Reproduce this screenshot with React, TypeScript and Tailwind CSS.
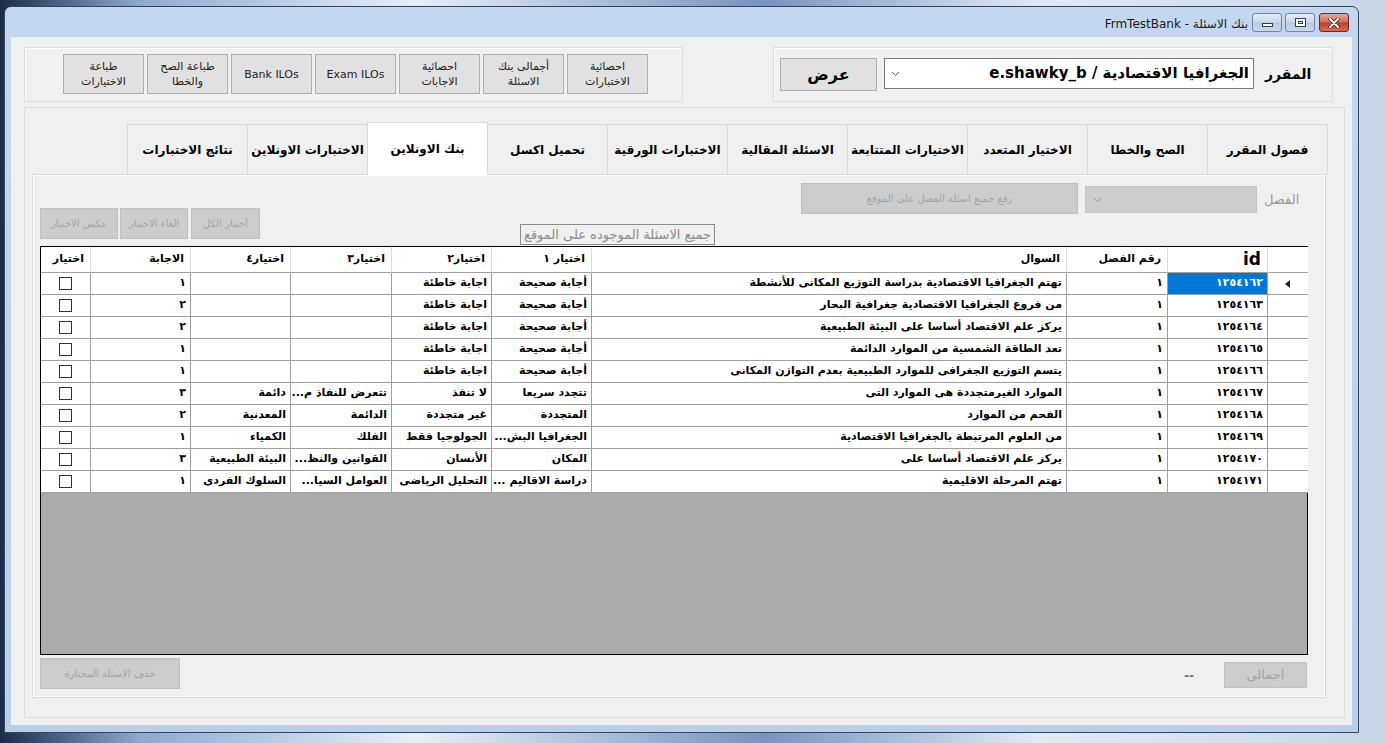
import React from "react";

const FONT = "font-['Liberation_Sans','DejaVu_Sans',sans-serif]";

type Row = {
  id: string;
  ch: string;
  q: string;
  a1: string;
  a2: string;
  a3: string;
  a4: string;
  ans: string;
};

const rows: Row[] = [
  { id: "١٢٥٤١٦٢", ch: "١", q: "تهتم الجغرافيا الاقتصادية بدراسة التوزيع المكانى للأنشطة", a1: "أجابة صحيحة", a2: "اجابة خاطئة", a3: "", a4: "", ans: "١" },
  { id: "١٢٥٤١٦٣", ch: "١", q: "من فروع الجغرافيا الاقتصادية جغرافية البحار", a1: "أجابة صحيحة", a2: "اجابة خاطئة", a3: "", a4: "", ans: "٢" },
  { id: "١٢٥٤١٦٤", ch: "١", q: "يركز علم الاقتصاد أساسا على البيئة الطبيعية", a1: "أجابة صحيحة", a2: "اجابة خاطئة", a3: "", a4: "", ans: "٢" },
  { id: "١٢٥٤١٦٥", ch: "١", q: "تعد الطاقة الشمسية من الموارد الدائمة", a1: "أجابة صحيحة", a2: "اجابة خاطئة", a3: "", a4: "", ans: "١" },
  { id: "١٢٥٤١٦٦", ch: "١", q: "يتسم التوزيع الجغرافى للموارد الطبيعية بعدم التوازن المكانى", a1: "أجابة صحيحة", a2: "اجابة خاطئة", a3: "", a4: "", ans: "١" },
  { id: "١٢٥٤١٦٧", ch: "١", q: "الموارد الغيرمتجددة هى الموارد التى", a1: "تتجدد سريعا", a2: "لا تنفذ", a3: "تتعرض للنفاذ م...", a4: "دائمة", ans: "٣" },
  { id: "١٢٥٤١٦٨", ch: "١", q: "الفحم من الموارد", a1: "المتجددة", a2: "غير متجددة", a3: "الدائمة", a4: "المعدنية", ans: "٢" },
  { id: "١٢٥٤١٦٩", ch: "١", q: "من العلوم المرتبطة بالجغرافيا الاقتصادية", a1: "الجغرافيا البش...", a2: "الجولوجيا فقط", a3: "الفلك", a4: "الكمياء", ans: "١" },
  { id: "١٢٥٤١٧٠", ch: "١", q: "يركز علم الاقتصاد أساسا على", a1: "المكان", a2: "الأنسان", a3: "القوانين والنظ...", a4: "البيئة الطبيعية", ans: "٣" },
  { id: "١٢٥٤١٧١", ch: "١", q: "تهتم المرحلة الاقليمية", a1: "دراسة الاقاليم ...", a2: "التحليل الرياضى", a3: "العوامل السيا...", a4: "السلوك الفردى", ans: "١" },
];

const tabs = [
  "نتائج الاختبارات",
  "الاختبارات الاونلاين",
  "بنك الاونلاين",
  "تحميل اكسل",
  "الاختبارات الورقية",
  "الاسئلة المقالية",
  "الاختيارات المتتابعة",
  "الاختيار المتعدد",
  "الصح والخطا",
  "فصول المقرر",
];

const topButtons = [
  ["طباعة", "الاختيارات"],
  ["طباعة الصح", "والخطا"],
  ["Bank ILOs"],
  ["Exam ILOs"],
  ["احصائية", "الاجابات"],
  ["أجمالى بنك", "الاسئلة"],
  ["احصائية", "الاختبارات"],
];

const GRID_COLS = "grid grid-cols-[50px_100px_100px_101px_100px_100px_475px_101px_100px_40px]";

function Chevron({ color = "#555" }: { color?: string }) {
  return (
    <svg width="9" height="6" viewBox="0 0 9 6">
      <polyline points="1,1 4.5,4.5 8,1" fill="none" stroke={color} strokeWidth="1" />
    </svg>
  );
}

function Cell({ text, sel, id }: { text: string; sel?: boolean; id?: boolean }) {
  return (
    <div
      className={`flex h-[22px] items-center justify-end overflow-hidden whitespace-nowrap border-r border-b border-[#a0a0a0] pr-[4px] text-[11px] font-bold ${
        sel ? "bg-[#0078d7] text-white" : "bg-white text-black"
      } ${id ? "tracking-[2.5px]" : ""}`}
    >
      <span dir="rtl">{text}</span>
    </div>
  );
}

function HeadCell({ text, big }: { text: string; big?: boolean }) {
  return (
    <div className="flex h-[26px] items-center justify-end border-r border-b border-r-[#dcdcdc] border-b-[#a0a0a0] bg-white pr-[6px]">
      <span dir="rtl" className={big ? "text-[17px] font-bold" : "text-[11px] font-bold"}>
        {text}
      </span>
    </div>
  );
}

function DataGrid() {
  return (
    <div className="ml-[7px] flex h-[409px] w-[1268px] flex-col border border-black bg-[#ababab]">
      <div className={GRID_COLS}>
        <HeadCell text="اختيار" />
        <HeadCell text="الاجابة" />
        <HeadCell text="اختيار٤" />
        <HeadCell text="اختيار٣" />
        <HeadCell text="اختيار٢" />
        <HeadCell text="اختيار ١" />
        <HeadCell text="السوال" />
        <HeadCell text="رقم الفصل" />
        <HeadCell text="id" big />
        <div className="h-[26px] border-b border-[#a0a0a0] bg-white" />
      </div>
      {rows.map((r, i) => (
        <div key={r.id} className={GRID_COLS}>
          <div className="flex h-[22px] items-center justify-center border-r border-b border-[#a0a0a0] bg-white">
            <div className="h-[13px] w-[13px] border border-[#333] bg-white" />
          </div>
          <Cell text={r.ans} />
          <Cell text={r.a4} />
          <Cell text={r.a3} />
          <Cell text={r.a2} />
          <Cell text={r.a1} />
          <Cell text={r.q} />
          <Cell text={r.ch} />
          <Cell text={r.id} sel={i === 0} id />
          <div className="flex h-[22px] items-center justify-center border-b border-[#a0a0a0] bg-white">
            {i === 0 && (
              <svg width="6" height="8" viewBox="0 0 6 8">
                <polygon points="5,0 5,8 0,4" fill="#222" />
              </svg>
            )}
          </div>
        </div>
      ))}
    </div>
  );
}

function DisabledBtn({ text, w, h, cls = "" }: { text: string; w: string; h: string; cls?: string }) {
  return (
    <div
      className={`flex items-center justify-center border border-[#bfbfbf] bg-[#cccccc] text-[10px] text-[#a2a2a2] ${w} ${h} ${cls}`}
    >
      <span dir="rtl">{text}</span>
    </div>
  );
}

function TabPage() {
  return (
    <div className="ml-[7px] flex h-[524px] w-[1294px] flex-col border border-[#d9d9d9] bg-[#f0f0f0] shadow-[inset_0_0_0_1px_#ffffff]">
      <div className="flex h-[71px] items-start pl-[7px]">
        <div className="mt-[33px] flex gap-[2px]">
          <DisabledBtn text="عكس الاختيار" w="w-[78px]" h="h-[31px]" />
          <DisabledBtn text="الغاء الاختيار" w="w-[68px]" h="h-[31px]" />
          <DisabledBtn text="أختيار الكل" w="w-[69px]" h="h-[31px]" cls="ml-px" />
        </div>
        <div className="ml-[260px] mt-[49px] flex h-[21px] w-[195px] items-center justify-center border border-[#8a8a8a] text-[13px] text-[#8d8d8d]">
          <span dir="rtl">جميع الاسئلة الموجوده على الموقع</span>
        </div>
        <DisabledBtn
          text="رفع جميع اسئلة الفصل على الموقع"
          w="w-[277px]"
          h="h-[31px]"
          cls="ml-[86px] mt-[8px]"
        />
        <div className="ml-[7px] mt-[11px] flex h-[27px] w-[172px] items-center border border-[#c4c4c4] bg-[#cccccc] pl-[7px]">
          <Chevron color="#9a9a9a" />
        </div>
        <div className="ml-[7px] mt-[15px] text-[13px] text-[#9a9a9a]">
          <span dir="rtl">الفصل</span>
        </div>
      </div>
      <DataGrid />
      <div className="flex items-start pl-[7px] pt-[3px]">
        <DisabledBtn text="حذف الاسئلة المختارة" w="w-[140px]" h="h-[31px]" />
        <div className="ml-[1004px] mt-[9px] text-[12px] font-bold text-[#6d6d6d]">--</div>
        <DisabledBtn text="اجمالى" w="w-[83px]" h="h-[26px]" cls="ml-[30px] mt-[4px] text-[13px]" />
      </div>
    </div>
  );
}

function CaptionButton({ kind }: { kind: "min" | "max" | "close" }) {
  if (kind === "close") {
    return (
      <div className="flex h-[19px] w-[30px] items-center justify-center rounded-[3px] border border-[#6b2a22] bg-[linear-gradient(180deg,#e9a99a_0%,#d0705c_45%,#c0412b_55%,#d66e52_100%)]">
        <svg width="12" height="10" viewBox="0 0 12 10">
          <path d="M2 1 L10 9 M10 1 L2 9" stroke="#3b1a14" strokeWidth="3.4" strokeLinecap="round" />
          <path d="M2 1 L10 9 M10 1 L2 9" stroke="#ffffff" strokeWidth="2" strokeLinecap="round" />
        </svg>
      </div>
    );
  }
  return (
    <div className="flex h-[19px] w-[30px] items-center justify-center rounded-[3px] border border-[#6d84a3] bg-[linear-gradient(180deg,#e4edf7_0%,#cbdaec_45%,#b4c9e3_55%,#c9daee_100%)]">
      {kind === "min" ? (
        <div className="mt-[4px] h-[4px] w-[11px] border border-[#2f3f55] bg-white" />
      ) : (
        <div className="h-[9px] w-[11px] border border-[#2f3f55] bg-white">
          <div className="mx-auto mt-[2px] h-[3px] w-[5px] border border-[#2f3f55] bg-[#dfe8f3]" />
        </div>
      )}
    </div>
  );
}

export default function App() {
  return (
    <div
      className={`h-[743px] w-[1385px] overflow-hidden bg-[linear-gradient(90deg,#1c2b47_0%,#8ea9cf_10%,#e9eff7_30%,#7893bd_55%,#e3eaf4_75%,#c9d6e6_100%)] pl-[4px] pt-[6px] ${FONT}`}
    >
      <div className="flex h-[727px] w-[1355px] flex-col rounded-t-[7px] border border-[#34465f] bg-[linear-gradient(180deg,#c3d7ee_0%,#b8cfe9_100%)]">
        {/* title bar */}
        <div className="flex h-[30px] items-start justify-end pr-[9px] pt-[6px]">
          <div className="mr-[4px] mt-[2px] text-[12px] text-[#1a1a1a] font-['DejaVu_Sans',sans-serif]">
            FrmTestBank - بنك الاسئلة
          </div>
          <div className="flex gap-[3px]">
            <CaptionButton kind="min" />
            <CaptionButton kind="max" />
            <div className="ml-[1px]">
              <CaptionButton kind="close" />
            </div>
          </div>
        </div>

        {/* client */}
        <div className="ml-[6px] flex h-[688px] w-[1341px] flex-col bg-[#f0f0f0] pt-[10px] font-['DejaVu_Sans',sans-serif]">
          <div className="flex h-[55px]">
            <div className="ml-[13px] h-[55px] w-[659px] border border-[#dcdcdc] pl-[38px] pt-[6px] shadow-[inset_1px_1px_0_#ffffff]">
              <div className="flex gap-[3px]">
                {topButtons.map((b, i) => (
                  <div
                    key={i}
                    className="flex h-[40px] w-[81px] flex-col items-center justify-center border border-[#adadad] bg-[#e1e1e1] text-[11px] leading-[15px] text-[#222]"
                  >
                    {b.map((t) => (
                      <span key={t} dir="rtl">
                        {t}
                      </span>
                    ))}
                  </div>
                ))}
              </div>
            </div>
            <div className="ml-[90px] flex h-[55px] w-[560px] items-start border border-[#dcdcdc] pl-[6px] pt-[10px] shadow-[inset_1px_1px_0_#ffffff]">
              <div className="flex h-[33px] w-[97px] items-center justify-center border border-[#adadad] bg-[#e1e1e1] text-[16px] font-bold text-black">
                عرض
              </div>
              <div className="ml-[7px] flex h-[31px] w-[370px] items-center justify-between border border-[#7a7a7a] bg-white pl-[6px] pr-[4px]">
                <Chevron />
                <span dir="rtl" className="text-[15px] font-bold text-black">
                  الجغرافيا الاقتصادية / e.shawky_b
                </span>
              </div>
              <div className="ml-[11px] mt-[6px] text-[14px] font-bold text-black">المقرر</div>
            </div>
          </div>

          <div className="ml-[13px] mt-[5px] flex h-[611px] w-[1321px] flex-col border border-[#dcdcdc] pt-[14px]">
            <div className="flex h-[52px] items-end pl-[103px]">
              {tabs.map((t) => {
                const sel = t === "بنك الاونلاين";
                return (
                  <div
                    key={t}
                    className={`-ml-px flex w-[121px] items-center justify-center whitespace-nowrap border border-b-0 border-[#d9d9d9] text-[12px] font-bold text-black ${
                      sel ? "relative z-10 -mb-px h-[53px] bg-white" : "h-[50px] bg-[#f0f0f0]"
                    }`}
                  >
                    <span dir="rtl">{t}</span>
                  </div>
                );
              })}
            </div>
            <TabPage />
          </div>
        </div>
      </div>
    </div>
  );
}
